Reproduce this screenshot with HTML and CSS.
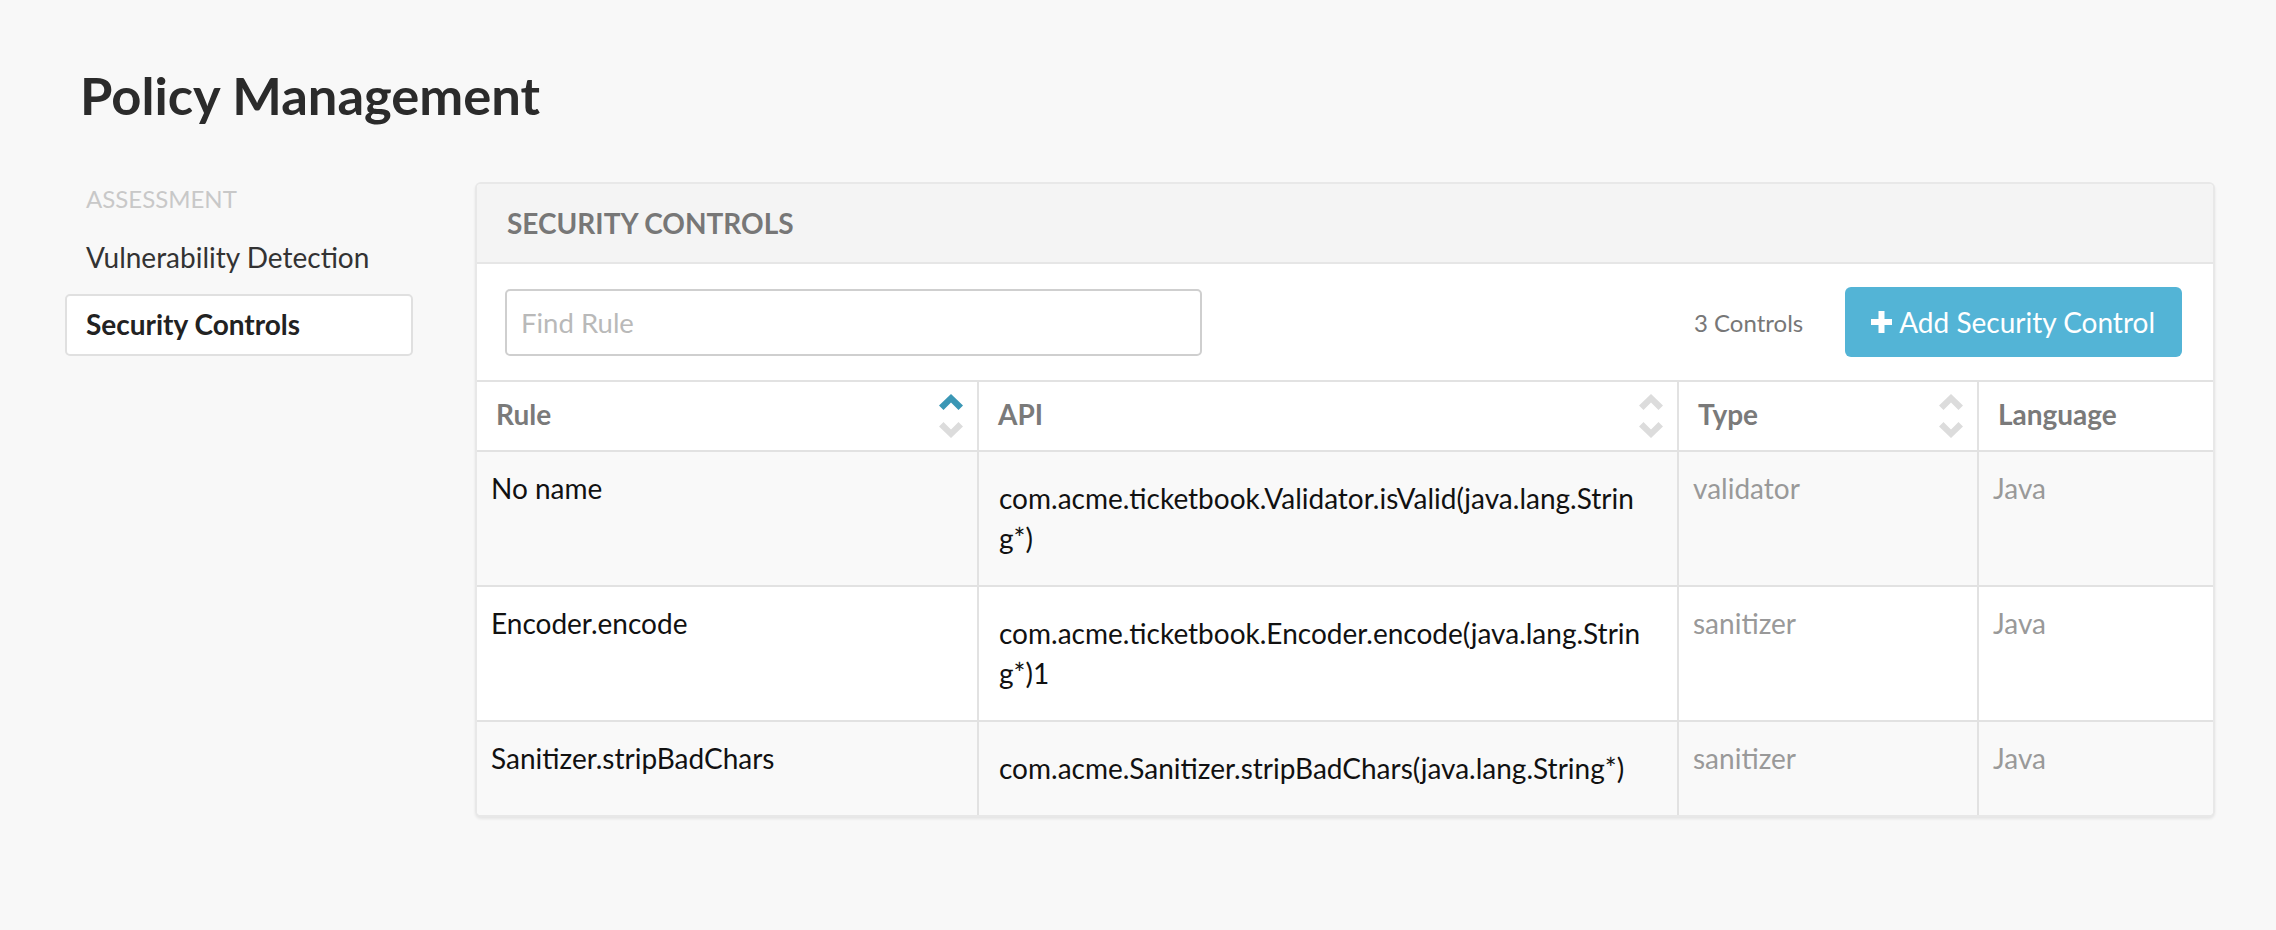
FILE: index.html
```html
<!DOCTYPE html>
<html lang="en">
<head>
<meta charset="utf-8">
<title>Policy Management</title>
<link rel="stylesheet" href="styles.css">
</head>
<body>
<div class="page">
  <h1 class="title">Policy Management</h1>
  <div class="layout">
    <nav class="sidenav">
      <div class="nav-heading">ASSESSMENT</div>
      <a class="nav-item">Vulnerability Detection</a>
      <a class="nav-item active">Security Controls</a>
    </nav>
    <section class="panel">
      <header class="panel-head">SECURITY CONTROLS</header>
      <div class="toolbar">
        <input class="search" type="text" placeholder="Find Rule">
        <span class="count">3 Controls</span>
        <button class="btn-add" type="button">
          <svg class="plus" viewBox="0 0 21 22" width="21" height="22"><path d="M7.5 0h6v8h7.5v6h-7.5v8h-6v-8H0v-6h7.5z"/></svg>
          <span>Add Security Control</span>
        </button>
      </div>
      <table class="grid">
        <colgroup>
          <col class="c-rule">
          <col class="c-api">
          <col class="c-type">
          <col class="c-lang">
        </colgroup>
        <thead>
          <tr>
            <th><div class="th-in"><span class="th-label">Rule</span>
              <span class="sort">
                <svg class="chev on" viewBox="0 0 24 17" width="24" height="17"><path d="M12 0L24 11.5L19.5 16L12 8.5L4.5 16L0 11.5Z"/></svg>
                <svg class="chev" viewBox="0 0 24 17" width="24" height="17"><path d="M12 17L24 5.5L19.5 1L12 8.5L4.5 1L0 5.5Z"/></svg>
              </span></div></th>
            <th><div class="th-in"><span class="th-label">API</span>
              <span class="sort">
                <svg class="chev" viewBox="0 0 24 17" width="24" height="17"><path d="M12 0L24 11.5L19.5 16L12 8.5L4.5 16L0 11.5Z"/></svg>
                <svg class="chev" viewBox="0 0 24 17" width="24" height="17"><path d="M12 17L24 5.5L19.5 1L12 8.5L4.5 1L0 5.5Z"/></svg>
              </span></div></th>
            <th><div class="th-in"><span class="th-label">Type</span>
              <span class="sort">
                <svg class="chev" viewBox="0 0 24 17" width="24" height="17"><path d="M12 0L24 11.5L19.5 16L12 8.5L4.5 16L0 11.5Z"/></svg>
                <svg class="chev" viewBox="0 0 24 17" width="24" height="17"><path d="M12 17L24 5.5L19.5 1L12 8.5L4.5 1L0 5.5Z"/></svg>
              </span></div></th>
            <th><div class="th-in"><span class="th-label">Language</span></div></th>
          </tr>
        </thead>
        <tbody>
          <tr class="odd">
            <td class="rule">No name</td>
            <td class="api">com.acme.ticketbook.Validator.isValid(java.lang.Strin<wbr>g*)</td>
            <td class="muted">validator</td>
            <td class="muted">Java</td>
          </tr>
          <tr>
            <td class="rule">Encoder.encode</td>
            <td class="api">com.acme.ticketbook.Encoder.encode(java.lang.Strin<wbr>g*)1</td>
            <td class="muted">sanitizer</td>
            <td class="muted">Java</td>
          </tr>
          <tr class="odd">
            <td class="rule">Sanitizer.stripBadChars</td>
            <td class="api">com.acme.Sanitizer.stripBadChars(java.lang.String*)</td>
            <td class="muted">sanitizer</td>
            <td class="muted">Java</td>
          </tr>
        </tbody>
      </table>
    </section>
  </div>
</div>
</body>
</html>
```

FILE: styles.css
```css
* { box-sizing: border-box; }

html, body {
  margin: 0;
  padding: 0;
  background: #f8f8f8;
  font-family: Lato, "Open Sans", "Liberation Sans", sans-serif;
  color: #333;
}

.page {
  padding: 66px 61px 40px 65px;
}

.title {
  margin: 0 0 57px 15px;
  font-size: 52.5px;
  line-height: 58px;
  font-weight: 700;
  color: #2b2b2b;
}

.layout {
  display: flex;
  align-items: flex-start;
}

.sidenav {
  width: 348px;
  flex: none;
  display: flex;
  flex-direction: column;
}

.nav-heading {
  padding-left: 21px;
  font-size: 24px;
  line-height: 36px;
  color: #c8c8c8;
  margin-bottom: 10px;
}

.nav-item {
  display: block;
  border: 2px solid transparent;
  border-radius: 5px;
  padding: 8px 19px 10px;
  font-size: 28px;
  line-height: 40px;
  color: #333;
}

.nav-item.active {
  margin-top: 5px;
  background: #fff;
  border-color: #e0e0e0;
  font-weight: 700;
  color: #222;
}

.panel {
  flex: 1;
  margin-left: 62px;
  margin-top: 1px;
  background: #fff;
  border: 2px solid #e8e8e8;
  border-radius: 6px;
  box-shadow: 0 2px 3px rgba(0, 0, 0, 0.08);
  overflow: hidden;
}

.panel-head {
  background: #f4f4f4;
  border-bottom: 2px solid #e6e6e6;
  padding: 19px 30px;
  font-size: 28px;
  line-height: 40px;
  font-weight: 700;
  color: #777;
}

.toolbar {
  display: flex;
  align-items: center;
  padding: 23px 31px 23px 28px;
}

.search {
  width: 697px;
  height: 67px;
  border: 2px solid #cfcfcf;
  border-radius: 5px;
  padding: 0 14px;
  font-family: Lato, "Open Sans", "Liberation Sans", sans-serif;
  font-size: 27.5px;
  color: #333;
  background: #fff;
  outline: none;
}

.search::placeholder {
  color: #b9b9b9;
}

.count {
  margin-left: auto;
  margin-right: 42px;
  font-size: 24px;
  color: #777;
}

.btn-add {
  display: inline-flex;
  align-items: center;
  gap: 7px;
  height: 70px;
  padding: 0 27px 0 26px;
  border: none;
  border-radius: 6px;
  background: #53b4d6;
  color: #fff;
  font-family: Lato, "Open Sans", "Liberation Sans", sans-serif;
  font-size: 28px;
}

.plus {
  fill: #fff;
  flex: none;
}

.grid {
  width: 100%;
  border-collapse: collapse;
  table-layout: fixed;
  border-top: 2px solid #e2e2e2;
}

.c-rule { width: 501px; }
.c-api { width: 700px; }
.c-type { width: 300px; }

.grid th,
.grid td {
  border-left: 2px solid #e2e2e2;
  border-bottom: 2px solid #e2e2e2;
}

.grid th:first-child,
.grid td:first-child {
  border-left: none;
}

.grid tbody tr:last-child td {
  border-bottom: none;
}

.grid th {
  height: 70px;
  padding: 0 14px 0 19px;
  text-align: left;
  vertical-align: middle;
  font-size: 28px;
  line-height: 40px;
  font-weight: 700;
  color: #7a7a7a;
}

.th-in {
  display: flex;
  align-items: center;
  justify-content: space-between;
}

.th-label {
  margin-bottom: 5px;
}

.sort {
  display: flex;
  flex-direction: column;
  gap: 10px;
}

.chev {
  display: block;
  fill: #dcdcdc;
}

.chev.on {
  fill: #3b97b5;
}

.grid td {
  vertical-align: top;
  padding: 16px 14px;
  font-size: 28px;
  line-height: 40px;
  color: #111;
}

.grid td.api {
  padding: 26px 23px 27px 20px;
  overflow-wrap: anywhere;
}

.grid td.muted {
  color: #999;
}

.grid tr.odd td {
  background: #f9f9f9;
}
```
